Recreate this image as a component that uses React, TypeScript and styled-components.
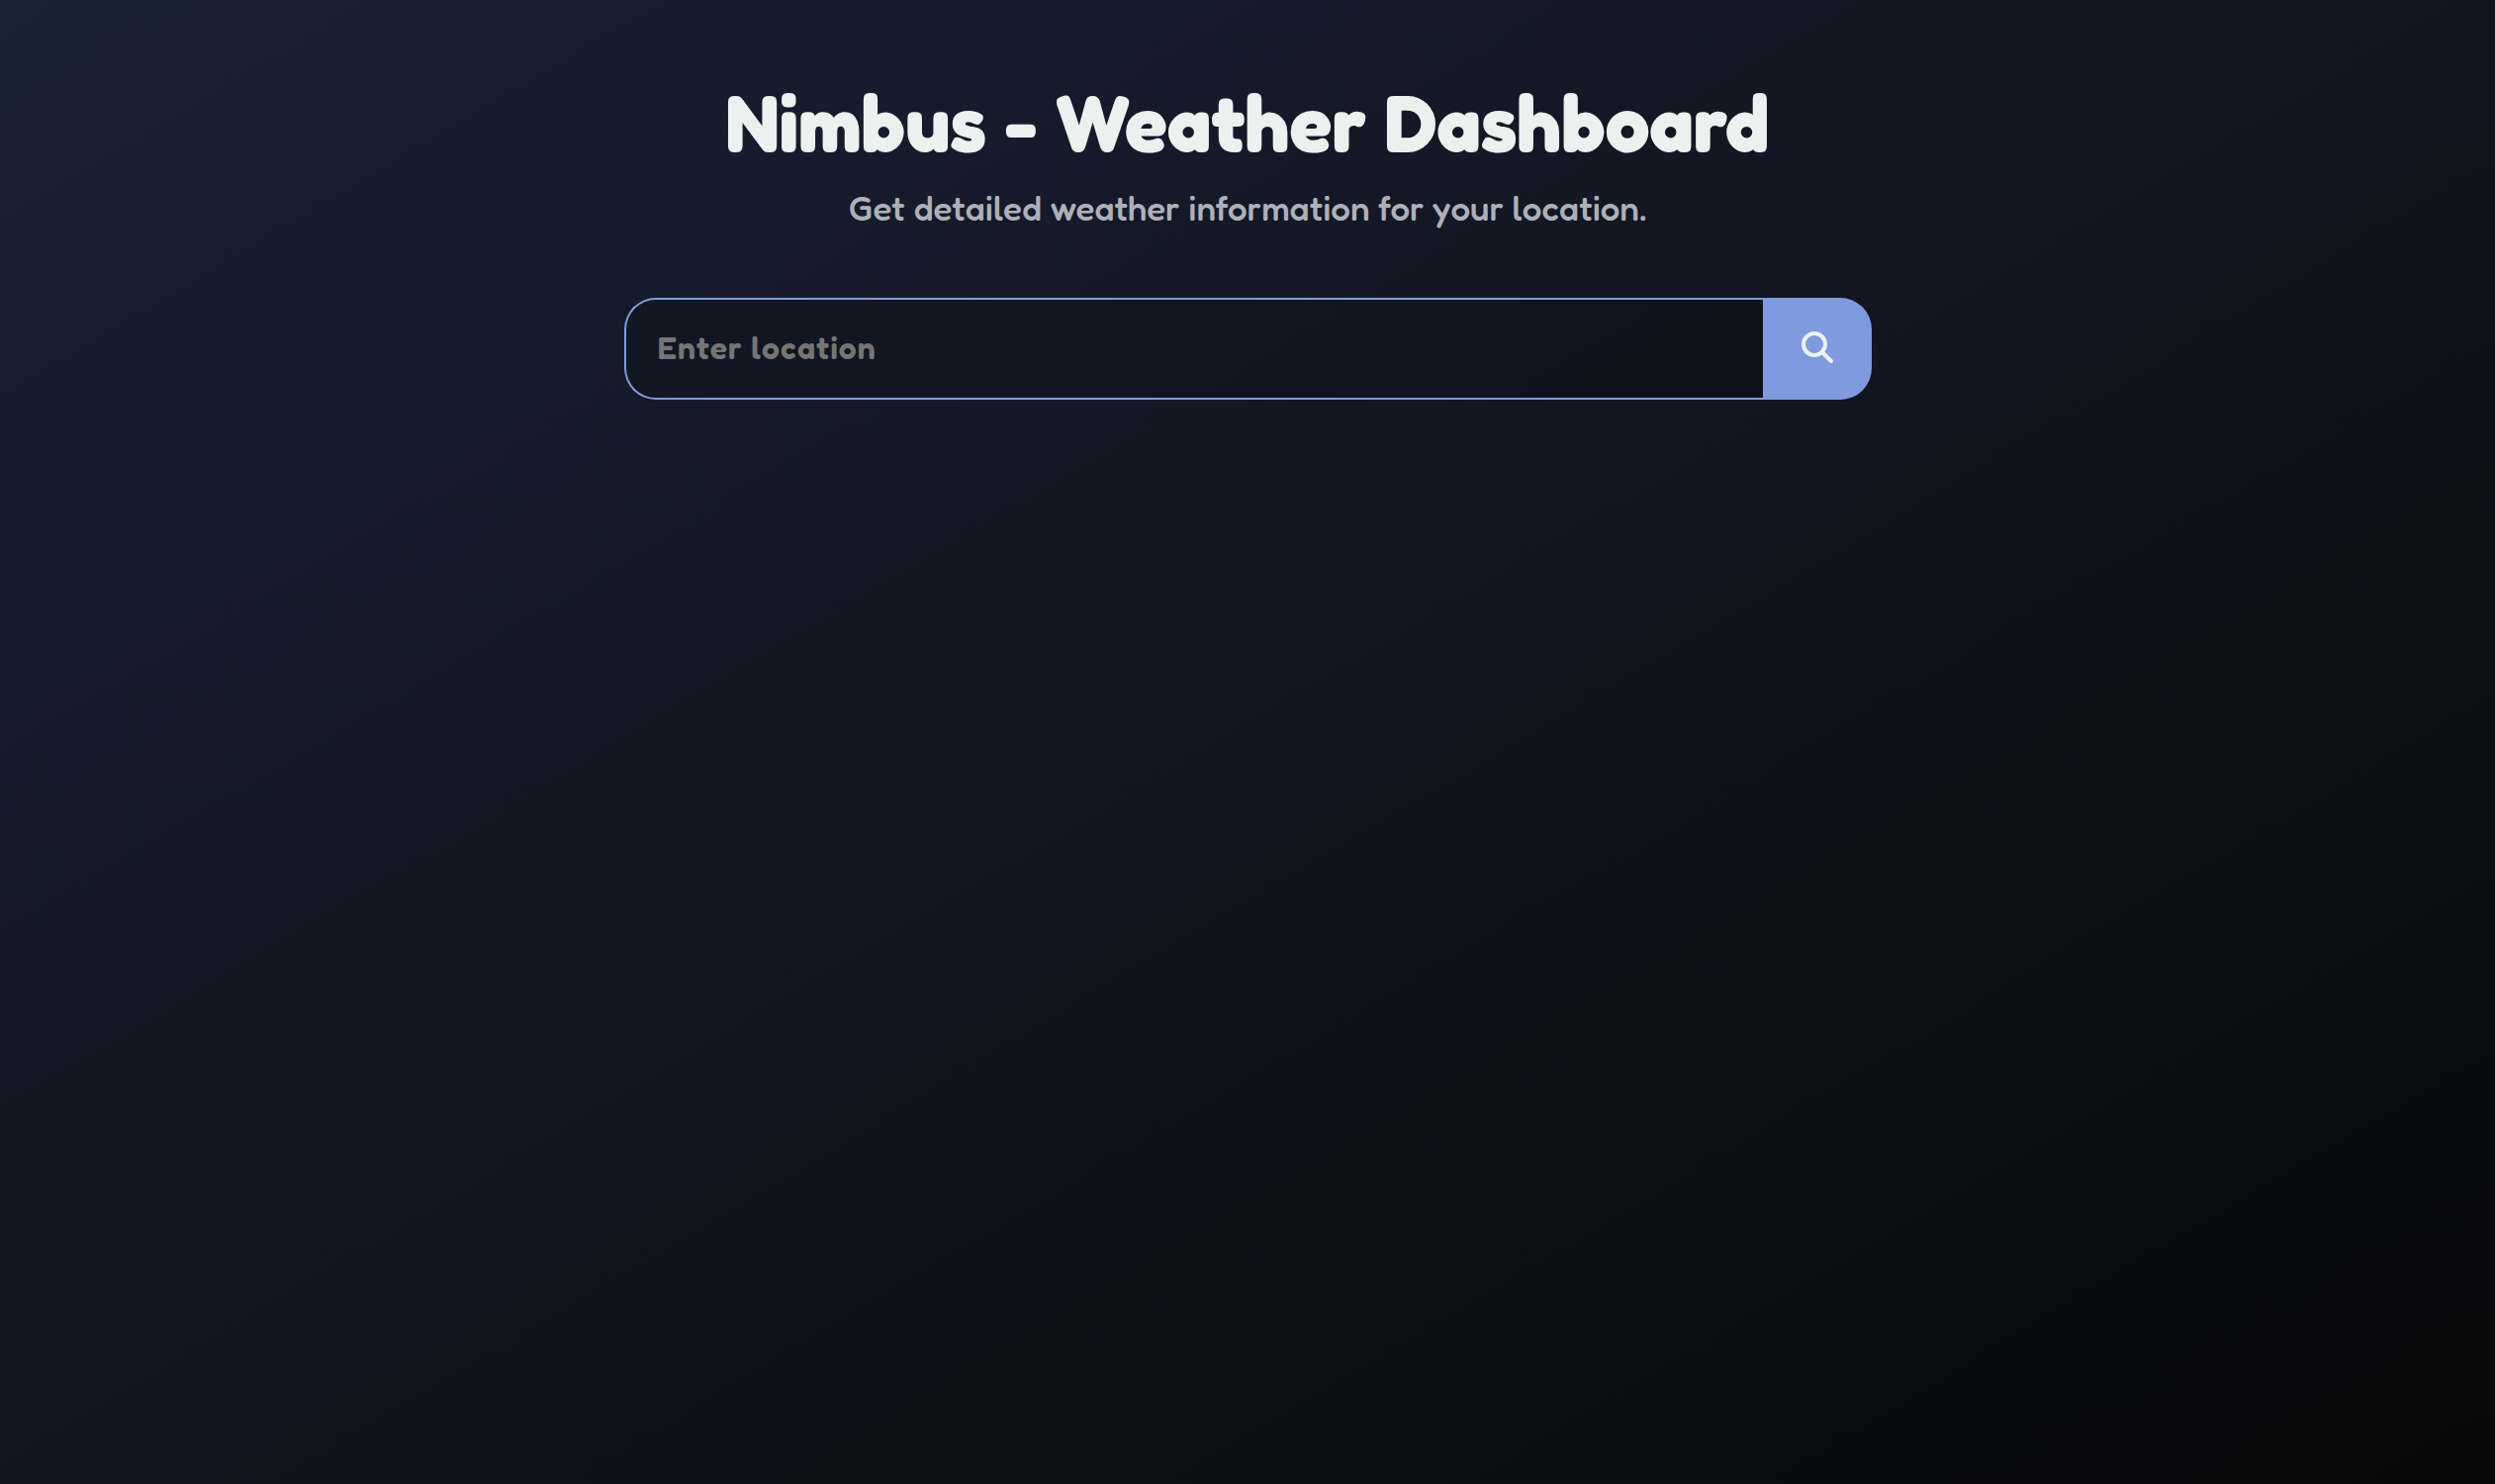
import React, { useState } from "react";
import styled, { createGlobalStyle } from "styled-components";

const GlobalStyle = createGlobalStyle`
  *, *::before, *::after { box-sizing: border-box; }
  body {
    margin: 0;
    font-family: Fredoka, Lato, "Open Sans", sans-serif;
    background: #08080a;
  }
`;

const Page = styled.main`
  min-height: 100vh;
  display: flex;
  flex-direction: column;
  align-items: center;
  padding: 78px 0;
  background: linear-gradient(to bottom right, #192136, #080808);
`;

const Header = styled.header`
  text-align: center;
`;

const Title = styled.h1`
  margin: 0;
  font-size: 80px;
  line-height: 92px;
  font-weight: 900;
  color: #ebf1ef;
`;

const Subtitle = styled.p`
  margin: 16px 0 0;
  font-size: 35px;
  line-height: 48px;
  font-weight: 500;
  color: #adb0b8;
`;

const SearchForm = styled.form`
  display: flex;
  width: 50%;
  height: 103px;
  margin-top: 67px;
`;

const SearchInput = styled.input`
  flex: 1;
  min-width: 0;
  padding: 0 32px 2px;
  border: 2px solid #7f9ade;
  border-right: 0;
  border-radius: 32px 0 0 32px;
  outline: 0;
  background: rgba(8, 8, 8, 0.2);
  color: #ebf1ef;
  font: 600 32px/40px Fredoka, Lato, "Open Sans", sans-serif;
  letter-spacing: 1px;

  &::placeholder {
    color: #757575;
    opacity: 1;
  }
`;

const SearchButton = styled.button`
  display: flex;
  align-items: center;
  justify-content: center;
  width: 110px;
  padding: 0 0 4px;
  border: 0;
  border-radius: 0 32px 32px 0;
  background: #7f9ade;
  color: #ebf1ef;
  cursor: pointer;
`;

const SearchIcon = () => (
  <svg width="32" height="32" viewBox="0 0 32 32" fill="none" stroke="currentColor" strokeWidth="4" strokeLinecap="round" aria-hidden="true">
    <circle cx="13" cy="13" r="11" />
    <path d="M21.5 21.5 30 30" />
  </svg>
);

export default function App() {
  const [location, setLocation] = useState("");

  return (
    <>
      <GlobalStyle />
      <Page>
        <Header>
          <Title>Nimbus - Weather Dashboard</Title>
          <Subtitle>Get detailed weather information for your location.</Subtitle>
        </Header>
        <SearchForm role="search" onSubmit={(event) => event.preventDefault()}>
          <SearchInput
            type="text"
            aria-label="Location"
            placeholder="Enter location"
            value={location}
            onChange={(event) => setLocation(event.target.value)}
          />
          <SearchButton type="submit" aria-label="Search">
            <SearchIcon />
          </SearchButton>
        </SearchForm>
      </Page>
    </>
  );
}
